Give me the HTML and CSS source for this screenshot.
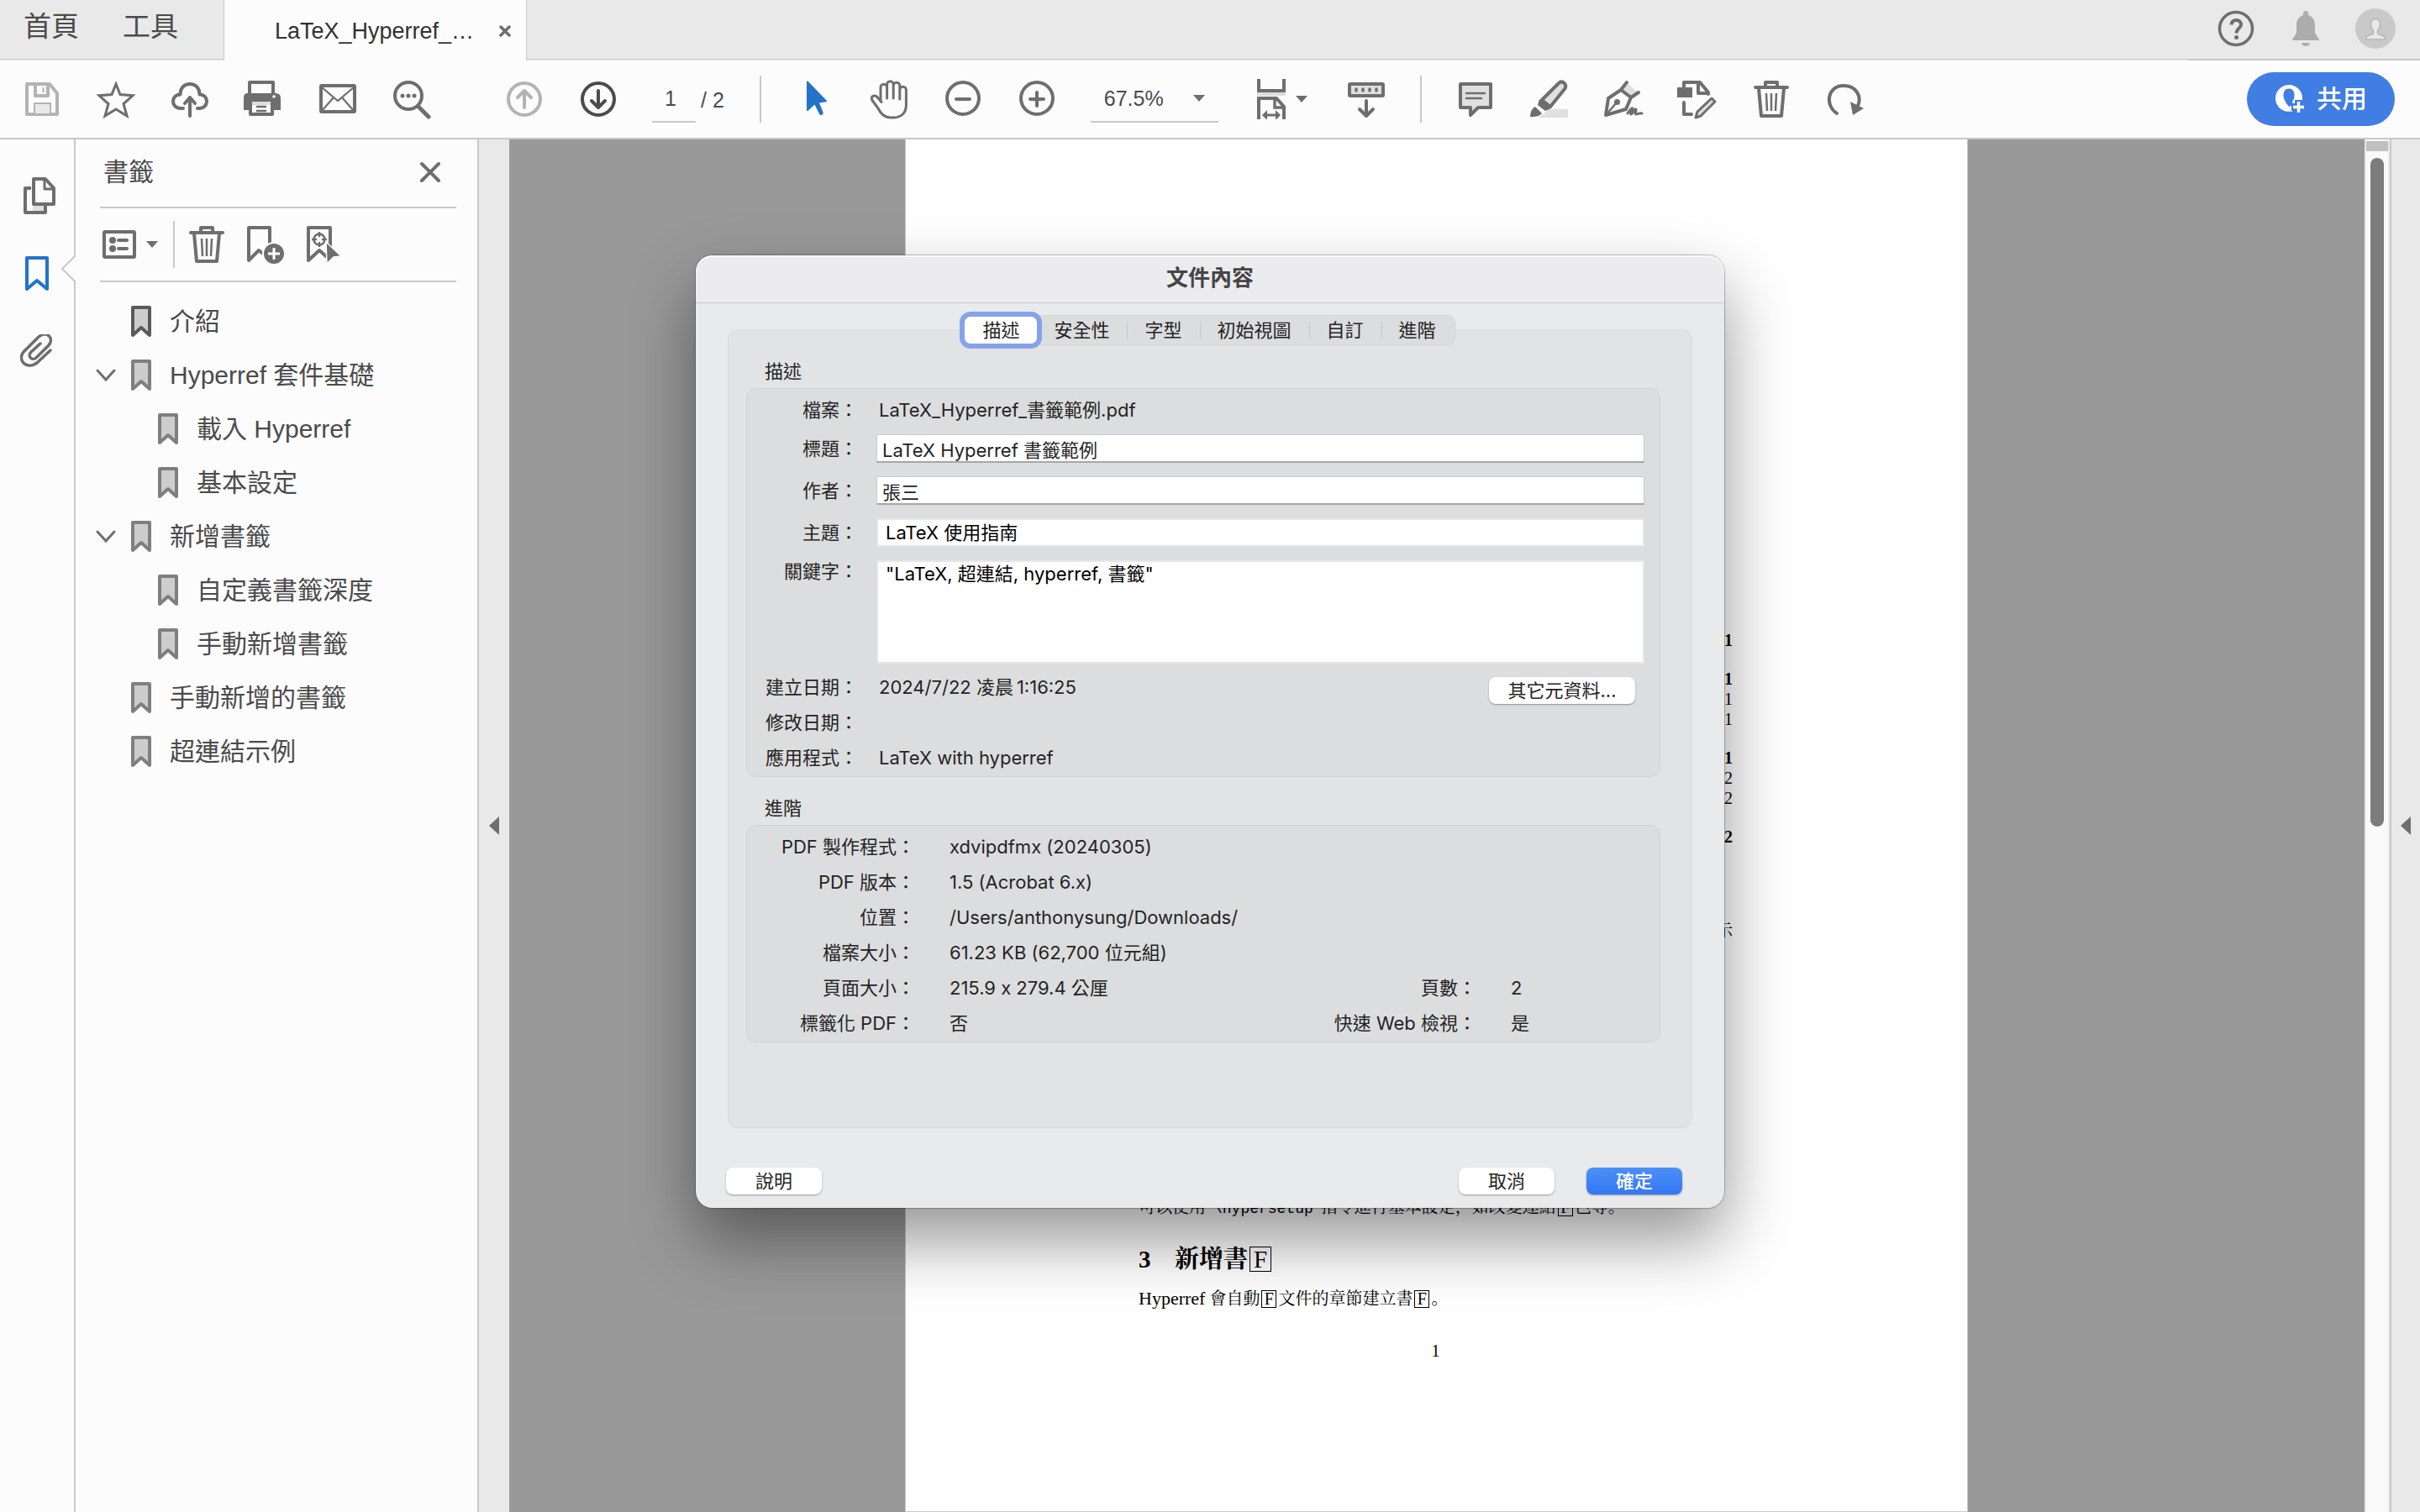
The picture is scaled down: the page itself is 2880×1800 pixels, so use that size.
FILE: index.html
```html
<!DOCTYPE html>
<html lang="zh-Hant">
<head>
<meta charset="utf-8">
<title>LaTeX_Hyperref_書籤範例.pdf</title>
<link rel="stylesheet" href="styles.css">
</head>
<body>
<svg class="defs" aria-hidden="true">
  <symbol id="mark" viewBox="0 0 24 38"><path class="mark-shape" d="M2 2H22V35L12 26L2 35Z"/></symbol>
  <symbol id="trash" viewBox="0 0 48 48"><g fill="none" stroke="currentColor"><path stroke-width="4" stroke-linecap="round" stroke-linejoin="round" d="M5 10H43M17 9V4H31V9M9 11L12 44H36L39 11"/><path stroke-width="2.5" d="M18 17L19 38M24 17V38M30 17L29 38"/></g></symbol>
</svg>

<header class="tabbar">
  <nav class="tabbar-nav">
    <a href="#home">首頁</a>
    <a href="#tools">工具</a>
  </nav>
  <div class="doc-tab">
    <span>LaTeX_Hyperref_…</span>
    <button class="plain" aria-label="關閉索引標籤"><svg width="14" height="14" viewBox="0 0 14 14"><path d="M2 2L12 12M12 2L2 12" stroke="currentColor" stroke-width="3.5" stroke-linecap="round"/></svg></button>
  </div>
  <div class="tabbar-rest"></div>
  <div class="account">
    <button class="plain" aria-label="說明"><svg width="44" height="44" viewBox="0 0 44 44" fill="none" stroke="currentColor"><circle cx="22" cy="22" r="19.5" stroke-width="3.5"/><path d="M16.500 17.500C17 13 20 12 22.500 12C26 12 28 14.500 28 17.500C28 21.500 22.500 22 22.500 27.500" stroke-width="4"/><circle cx="22.500" cy="32.500" r="2.500" fill="currentColor" stroke="none"/></svg></button>
    <button class="plain bell" aria-label="通知"><svg width="34" height="42" viewBox="0 0 34 42" fill="currentColor"><path d="M14 5V3a3 3 0 0 1 6 0V5C26 7 28 11 28 18V26L33 34V35H1V34L6 26V18C6 11 8 7 14 5ZM12 38H22C21 41 19 42 17 42S13 41 12 38Z"/></svg></button>
    <button class="plain avatar" aria-label="個人檔案"><svg width="48" height="48" viewBox="0 0 48 48"><circle cx="24" cy="24" r="24" fill="#c9c9c9"/><path d="M24 12.500C27.500 12.500 29.500 15 29.500 19C29.500 23 27.500 25 26.500 27V30L35 33.500V37H13V33.500L21.500 30V27C20.500 25 18.500 23 18.500 19C18.500 15 20.500 12.500 24 12.500Z" fill="#e9e9e9" stroke="#b5b5b5" stroke-width="1.500"/></svg></button>
  </div>
</header>

<div class="toolbar">
  <button class="tool faded" aria-label="儲存"><svg viewBox="0 0 48 48" fill="none" stroke="currentColor"><path stroke-width="4" stroke-linejoin="round" d="M6 6H33L42 17V42H6ZM16 6V20H31V6"/><path stroke-width="2" fill="#e9e9e9" d="M15 42V29H34V42Z"/><path stroke-width="2" d="M25.500 10V16"/></svg></button>
  <button class="tool" aria-label="加星號"><svg viewBox="0 0 48 48" fill="none" stroke="currentColor"><path stroke-width="3" d="M24 6L29 18.500L44 19.800L33 29.500L37 44L24 36L11 44L15 29.500L4 19.800L19 18.500Z"/></svg></button>
  <button class="tool" aria-label="上傳"><svg viewBox="0 0 48 48" fill="none" stroke="currentColor" stroke-width="4" stroke-linecap="round" stroke-linejoin="round"><path d="M16 35H13C7.500 35 4 31 4 27C4 22 7.500 18.500 12.500 18.500C12.500 11 17 6 24 6S35.500 11 35.500 18.500C40.500 18.500 44 22 44 27C44 31 40.500 35 35 35H33"/><path d="M24 44V22M18 29L24 22L30 29"/></svg></button>
  <button class="tool" aria-label="列印"><svg viewBox="2 0 48 48" fill="none" stroke="currentColor"><path stroke-width="4" stroke-linejoin="round" d="M9 20V4H37V20"/><path fill="currentColor" stroke="none" d="M6 17H8V14H38V17H40Q46 17 46 23V37H2V23Q2 17 6 17Z"/><path fill="#fcfcfc" stroke="none" d="M11 6H35V17H11Z"/><path stroke-width="4" stroke-linejoin="round" fill="#fff" d="M10 27H36V42H10Z"/><path fill="#ddd" stroke="none" d="M12 27H34V31H12Z"/><path stroke-width="2.500" d="M17 33H29M17 38H29"/><circle cx="38" cy="21" r="1.800" fill="#fff" stroke="none"/></svg></button>
  <button class="tool" aria-label="電子郵件"><svg viewBox="0 0 48 48" fill="none" stroke="currentColor"><rect x="4" y="8" width="40" height="31" rx="1" stroke-width="4"/><path stroke-width="2.200" d="M5 10L24 26L43 10M5 38L19 22M43 38L29 22"/></svg></button>
  <button class="tool" aria-label="尋找"><svg viewBox="0 0 48 48" fill="none" stroke="currentColor"><circle cx="20" cy="20" r="16" stroke-width="4"/><path d="M32 33L44 45" stroke-width="5" stroke-linecap="round"/><g fill="currentColor" stroke="none"><circle cx="13" cy="20" r="2.500"/><circle cx="20" cy="20" r="2.500"/><circle cx="27" cy="20" r="2.500"/></g></svg></button>

  <div class="pager">
    <button class="tool faded" aria-label="上一頁"><svg viewBox="0 0 48 48" fill="none" stroke="currentColor" stroke-width="4" stroke-linecap="round" stroke-linejoin="round"><circle cx="24" cy="24" r="19"/><path d="M24 34V14M16 22L24 14L32 22"/></svg></button>
    <button class="tool" aria-label="下一頁"><svg viewBox="0 0 48 48" fill="none" stroke="currentColor" stroke-width="4" stroke-linecap="round" stroke-linejoin="round"><circle cx="24" cy="24" r="19"/><path d="M24 14V34M16 26L24 34L32 26"/></svg></button>
    <input class="page-input" type="text" value="1" aria-label="頁碼">
    <span class="page-total">/ 2</span>
  </div>
  <span class="tool-sep"></span>
  <button class="tool active" aria-label="選取"><svg viewBox="-2 0 48 48" fill="currentColor"><path d="M12 3.500C12 2.500 13 2.300 13.800 3L35.500 25.500C36.500 26.600 36 27.200 35 27.300L27 28.500L31.500 39.500C32.500 42.500 28.500 44.500 27 41.500L21.500 30.500L14 37.500C12.800 38.500 12 38 12 37Z"/></svg></button>
  <button class="tool" aria-label="手形"><svg viewBox="0 0 48 48" fill="none" stroke="currentColor" stroke-width="3" stroke-linecap="round" stroke-linejoin="round"><path d="M14 26V10a3.800 3.800 0 0 1 7.600 0V23M21.600 22V6.500a3.800 3.800 0 0 1 7.600 0V23M29.200 22V8a3.800 3.800 0 0 1 7.600 0V24M36.800 22V13a3.800 3.800 0 0 1 7.600 0V31C44.400 41 38 46 29 46H26C18 46 14 41 11 35L3.800 25C2 21 6 18.500 9.500 21L15 27.500"/></svg></button>
  <button class="tool" aria-label="縮小"><svg viewBox="0 0 48 48" fill="none" stroke="currentColor" stroke-width="4" stroke-linecap="round"><circle cx="24" cy="23" r="19"/><path d="M16 24H32"/></svg></button>
  <button class="tool" aria-label="放大"><svg viewBox="0 0 48 48" fill="none" stroke="currentColor" stroke-width="4" stroke-linecap="round"><circle cx="24" cy="23" r="19"/><path d="M16 24H32M24 16V32"/></svg></button>
  <button class="zoom-level" aria-label="縮放比例"><span>67.5%</span><i class="caret"></i></button>
  <button class="fit" aria-label="符合頁寬"><svg viewBox="0 0 48 48" fill="none" stroke="currentColor" stroke-width="4"><path fill="#ddd" stroke="none" d="M6 15H40V20H6Z"/><path d="M8 0V14H38V0M8 48V23H29L38 33V48"/><path d="M27 23V34H38" stroke-width="3.500"/><path stroke-width="3" d="M14 43H32"/><path fill="currentColor" stroke="none" d="M12 43L18 37V49ZM34 43L28 37V49Z"/></svg><i class="caret"></i></button>
  <button class="tool" aria-label="捲動模式"><svg viewBox="0 0 48 48" fill="none" stroke="currentColor" stroke-width="4" stroke-linecap="round" stroke-linejoin="round"><rect x="4" y="6" width="40" height="14" rx="1" fill="#e0e0e0"/><path d="M12 12V14M20 12V14M28 12V14M36 12V14" stroke-width="3.500"/><path d="M24 26V43M16 36L24 44L32 36"/></svg></button>
  <span class="tool-sep"></span>
  <button class="tool" aria-label="註解"><svg viewBox="0 0 48 48" fill="none" stroke="currentColor"><path fill="#e0e0e0" stroke-width="4" stroke-linejoin="round" d="M6 6H42V34H27L18 43V34H6Z"/><path stroke-width="2.500" stroke-linecap="round" d="M13 17H35M13 23H31"/></svg></button>
  <button class="tool" aria-label="螢光標示"><svg viewBox="0 0 48 48" fill="none" stroke="currentColor" stroke-linejoin="round"><path fill="#e0e0e0" stroke="none" d="M24 36H46V46H11Z"/><path fill="#e0e0e0" stroke-width="4" d="M15 25L35 5C37 3 39.500 3 41.500 5C43.800 7.200 43.800 9.500 42 12L25 33Z"/><path fill="currentColor" stroke="none" d="M12 24L26 35L19 38L10 31ZM7 33L15 41C12 45 6 45 1 45C1 40 3 35 7 33Z"/></svg></button>
  <button class="tool" aria-label="簽名"><svg viewBox="0 0 48 48" fill="none" stroke="currentColor" stroke-width="4" stroke-linecap="round" stroke-linejoin="round"><path fill="#e0e0e0" stroke="none" d="M28 4L42 17L33 21L21 13Z"/><path d="M28 4L21 13L33 22L42 16M21 13L6 23L3 43L27 36L33 22"/><path stroke-width="2.500" d="M4 42L15 29"/><circle cx="16.500" cy="27.500" r="3.500" fill="currentColor" stroke="none"/><path stroke-width="3" d="M29 41C31 38 34 34 35 35S31 42 33 42S38 35 39 36S37 42 39 42S44 40 46 41"/></svg></button>
  <button class="tool" aria-label="編輯 PDF"><svg viewBox="0 0 48 48" fill="none" stroke="currentColor" stroke-width="4" stroke-linecap="round" stroke-linejoin="round"><path d="M8 10V4H27L37 16V18M25 5V17H36M8 28V42H17"/><path fill="currentColor" stroke="none" d="M0 10H18V22H0Z"/><path fill="#e0e0e0" stroke-width="3" d="M41 23L45 27L28 44L22 46L24 39Z"/></svg></button>
  <button class="tool" aria-label="刪除"><svg><use href="#trash"/></svg></button>
  <button class="tool" aria-label="旋轉"><svg viewBox="0 0 48 48" fill="none" stroke="currentColor" stroke-width="4" stroke-linecap="round"><path d="M14 41C-1 31 3 8 22 8C37 8 45 21 38 34"/><path d="M30 27L46 35L33 43Z" fill="currentColor" stroke="none"/></svg></button>
  <button class="share"><svg width="36" height="36" viewBox="0 0 36 36"><circle cx="17" cy="17" r="16" fill="#fff"/><path d="M17 5.500C21.500 5.500 23.500 9 23.500 13.500C23.500 17.500 22 19.500 21 21V22.500L27 25L17 34L13 33V21C12 19.500 10.500 17.500 10.500 13.500C10.500 9 12.500 5.500 17 5.500Z" fill="#407ee3"/><path d="M5 25L13.500 22.500L17 27L20.500 25.500V31.500C19 33 16 33 14.500 32.700C10 32 7 29 5 25Z" fill="#fff"/><path d="M28.500 19V36M20 27.500H36" stroke="#407ee3" stroke-width="9"/><path d="M28.500 21V34M22 27.500H35" stroke="#fff" stroke-width="3.500"/></svg>共用</button>
</div>

<div class="workspace">
  <nav class="rail" aria-label="導覽窗格">
    <button class="plain" aria-label="頁面縮圖"><svg width="44" height="46" viewBox="-1 0 44 46" fill="none" stroke="currentColor" stroke-width="4" stroke-linejoin="round"><path fill="#e0e0e0" stroke="none" d="M14 34H28V42H14Z"/><path d="M12 14H5V43H29V34"/><path fill="#fcfcfc" d="M15 3H29L39 14V33H15Z"/><path d="M28 4V15H38" stroke-width="3"/></svg></button>
    <button class="plain current" aria-label="書籤"><svg width="44" height="46" viewBox="0 0 44 46" fill="none" stroke="currentColor" stroke-width="4" stroke-linejoin="round"><path d="M8 3H32V40L20 30L8 40Z"/></svg></button>
    <button class="plain" aria-label="附件"><svg width="44" height="46" viewBox="2 5 44 46" fill="none" stroke="currentColor" stroke-width="3.500" stroke-linecap="round"><path d="M38 24L22 39C10 48-2 36 6 26L24 8C34 0 43 10 36 18L21 33C16 37 10 31 15 26L26 16"/></svg></button>
    <svg class="notch" width="18" height="32" viewBox="0 0 18 32"><path d="M18 0L2 16L18 32" fill="#fcfcfc" stroke="#c8c8c8" stroke-width="2"/></svg>
  </nav>

  <aside class="panel">
    <div class="panel-head">
      <h2>書籤</h2>
      <button class="plain" aria-label="關閉"><svg width="26" height="26" viewBox="0 0 26 26"><path d="M3 3L23 23M23 3L3 23" stroke="currentColor" stroke-width="4" stroke-linecap="round"/></svg></button>
    </div>
    <div class="panel-tools">
      <button class="plain options" aria-label="選項"><svg width="42" height="36" viewBox="0 0 42 36" fill="none" stroke="currentColor" stroke-width="4"><rect x="3" y="3" width="36" height="30" rx="1"/><path d="M20 13H30M20 23H30" stroke-linecap="round"/><g fill="currentColor" stroke="none"><circle cx="13" cy="13" r="4"/><circle cx="13" cy="23" r="4"/></g></svg><i class="caret"></i></button>
      <span class="tool-sep"></span>
      <button class="plain" aria-label="刪除書籤"><svg width="48" height="48"><use href="#trash"/></svg></button>
      <button class="plain" aria-label="新增書籤"><svg width="48" height="48" viewBox="0 0 48 48" fill="none" stroke="currentColor"><path stroke-width="4" stroke-linejoin="round" d="M29 27V4H4V43L16 31L21 35"/><circle cx="34" cy="35" r="13" fill="currentColor" stroke="#fcfcfc" stroke-width="2"/><path d="M34 28V42M27 35H41" stroke="#fff" stroke-width="3"/></svg></button>
      <button class="plain" aria-label="尋找目前書籤"><svg width="48" height="48" viewBox="0 0 48 48" fill="none" stroke="currentColor"><path stroke-width="4" stroke-linejoin="round" d="M31 27V4H5V43L18 31L27 39"/><circle cx="18" cy="18" r="6.500" stroke-width="2.500"/><path stroke-width="2.500" d="M18 9V15M18 21V27M9 18H15M21 18H27"/><path d="M26 21L44 38L35 39L27 47Z" fill="currentColor" stroke="#fcfcfc" stroke-width="1.500"/></svg></button>
    </div>
    <ul class="tree">
      <li><div class="node"><span class="twist"></span><a class="selected" href="#intro"><svg><use href="#mark"/></svg>介紹</a></div></li>
      <li><div class="node"><button class="twist" aria-label="收合"><svg width="24" height="16" viewBox="0 0 24 16"><path d="M2 2L12 13L22 2" fill="none" stroke="currentColor" stroke-width="3" stroke-linecap="round"/></svg></button><a href="#basics"><svg><use href="#mark"/></svg>Hyperref 套件基礎</a></div>
        <ul>
          <li><div class="node"><span class="twist"></span><a href="#load"><svg><use href="#mark"/></svg>載入 Hyperref</a></div></li>
          <li><div class="node"><span class="twist"></span><a href="#setup"><svg><use href="#mark"/></svg>基本設定</a></div></li>
        </ul>
      </li>
      <li><div class="node"><button class="twist" aria-label="收合"><svg width="24" height="16" viewBox="0 0 24 16"><path d="M2 2L12 13L22 2" fill="none" stroke="currentColor" stroke-width="3" stroke-linecap="round"/></svg></button><a href="#add"><svg><use href="#mark"/></svg>新增書籤</a></div>
        <ul>
          <li><div class="node"><span class="twist"></span><a href="#depth"><svg><use href="#mark"/></svg>自定義書籤深度</a></div></li>
          <li><div class="node"><span class="twist"></span><a href="#manual"><svg><use href="#mark"/></svg>手動新增書籤</a></div></li>
        </ul>
      </li>
      <li><div class="node"><span class="twist"></span><a href="#added"><svg><use href="#mark"/></svg>手動新增的書籤</a></div></li>
      <li><div class="node"><span class="twist"></span><a href="#example"><svg><use href="#mark"/></svg>超連結示例</a></div></li>
    </ul>
  </aside>

  <button class="collapse left" aria-label="收合左側窗格"><i></i></button>

  <main class="canvas">
    <article class="page" lang="zh-Hans">
      <ol class="toc">
        <li class="sec">1</li>
        <li class="sec">1</li>
        <li>1</li>
        <li>1</li>
        <li class="sec">1</li>
        <li>2</li>
        <li>2</li>
        <li class="sec">2</li>
      </ol>
      <p class="line-end">示</p>
      <p class="para-setup">可以使用 <code>\hypersetup</code> 指令進行基本設定，如改變連結<b class="tofu">F</b>色等。</p>
      <h3><span>3</span>新增書<b class="tofu">F</b></h3>
      <p><span class="latin">Hyperref</span> 會自動<b class="tofu">F</b>文件的章節建立書<b class="tofu">F</b>。</p>
      <p class="folio">1</p>
    </article>
  </main>

  <div class="scrollbar"><span class="scroll-split"></span><span class="scroll-thumb"></span></div>
  <button class="collapse right" aria-label="展開右側窗格"><i></i></button>
</div>

<div class="overlay">
  <form class="dialog" role="dialog" aria-labelledby="dlg-title">
    <h1 id="dlg-title">文件內容</h1>
    <div class="dialog-body">
      <div class="tabs" role="tablist">
        <button type="button" role="tab" aria-selected="true">描述</button>
        <button type="button" role="tab">安全性</button>
        <button type="button" role="tab">字型</button>
        <button type="button" role="tab">初始視圖</button>
        <button type="button" role="tab">自訂</button>
        <button type="button" role="tab">進階</button>
      </div>
      <div class="tab-panel">
        <h2>描述</h2>
        <div class="box">
          <div class="row"><span class="label">檔案：</span><span class="value">LaTeX_Hyperref_書籤範例.pdf</span></div>
          <div class="row field"><label class="label" for="f-title">標題：</label><input id="f-title" class="bezel" type="text" value="LaTeX Hyperref 書籤範例"></div>
          <div class="row field"><label class="label" for="f-author">作者：</label><input id="f-author" class="bezel" type="text" value="張三"></div>
          <div class="row field"><label class="label" for="f-subject">主題：</label><input id="f-subject" class="flat" type="text" value="LaTeX 使用指南"></div>
          <div class="row keywords"><label class="label" for="f-keys">關鍵字：</label><textarea id="f-keys" class="flat">"LaTeX, 超連結, hyperref, 書籤"</textarea></div>
          <div class="row"><span class="label">建立日期：</span><span class="value">2024/7/22 凌晨&#8201;1:16:25</span><button type="button" class="push meta">其它元資料...</button></div>
          <div class="row"><span class="label">修改日期：</span><span class="value"></span></div>
          <div class="row"><span class="label">應用程式：</span><span class="value">LaTeX with hyperref</span></div>
        </div>
        <h2>進階</h2>
        <div class="box">
          <table>
            <colgroup><col class="c-label"><col><col class="c-label-2"><col class="c-value-2"></colgroup>
            <tr><th>PDF 製作程式：</th><td colspan="3">xdvipdfmx (20240305)</td></tr>
            <tr><th>PDF 版本：</th><td colspan="3">1.5 (Acrobat 6.x)</td></tr>
            <tr><th>位置：</th><td colspan="3">/Users/anthonysung/Downloads/</td></tr>
            <tr><th>檔案大小：</th><td colspan="3">61.23 KB (62,700 位元組)</td></tr>
            <tr><th>頁面大小：</th><td>215.9 x 279.4 公厘</td><th>頁數：</th><td>2</td></tr>
            <tr><th>標籤化 PDF：</th><td>否</td><th>快速 Web 檢視：</th><td>是</td></tr>
          </table>
        </div>
      </div>
    </div>
    <footer>
      <button type="button" class="push help">說明</button>
      <button type="button" class="push">取消</button>
      <button type="submit" class="push primary">確定</button>
    </footer>
  </form>
</div>
</body>
</html>
```
FILE: styles.css
```css
* { box-sizing: border-box; }

body {
  margin: 0;
  height: 100vh;
  display: grid;
  grid-template-rows: 72px 94px minmax(0, 1fr);
  overflow: hidden;
  background: #fcfcfc;
  color: #4b4b4b;
  font: 30px/40px "Liberation Sans", "Noto Sans CJK TC", sans-serif;
}

button, input, textarea { font: inherit; color: inherit; margin: 0; }
button { border: 0; background: none; padding: 0; }
a { color: inherit; text-decoration: none; }
h1, h2, h3, p, ul, ol { margin: 0; padding: 0; font-weight: 400; }
ul, ol { list-style: none; }
svg { display: block; flex: none; }
.defs { position: absolute; width: 0; height: 0; }
.plain { display: flex; align-items: center; color: #6e6e6e; }

/* Tab bar */
.tabbar { display: flex; background: #e9e9e9; }
.tabbar-nav {
  display: flex;
  gap: 52px;
  width: 266px;
  padding: 12px 0 0 28px;
  font-size: 33px;
  border-bottom: 1px solid #c8c8c8;
  height: 71px;
}
.doc-tab {
  display: flex;
  align-items: center;
  justify-content: space-between;
  width: 361px;
  padding: 2px 18px 0 60px;
  background: #fcfcfc;
  border: 1px solid #c8c8c8;
  border-width: 0 1px;
  color: #323232;
  font-size: 27px;
}
.tabbar-rest { flex: 1; height: 71px; border-bottom: 1px solid #c8c8c8; }
.account {
  display: flex;
  align-items: center;
  width: 276px;
  padding: 0 30px 2px 35px;
  border-bottom: 2px solid #c8c8c8;
}
.bell { margin: 0 42px 0 44px; color: #acacac; }
.bell + .avatar { margin-left: auto; }

/* Main toolbar */
.toolbar {
  display: flex;
  align-items: center;
  padding: 0 30px 0 6px;
  border-bottom: 2px solid #c8c8c8;
  color: #6e6e6e;
}
.tool { width: 88px; height: 88px; display: grid; place-items: center; flex: none; }
.tool svg { width: 48px; height: 48px; overflow: visible; }
.tool.faded { color: #b3b3b3; }
.tool.active { color: #2273c9; }
.tool-sep { width: 2px; height: 56px; background: #c8c8c8; margin: 0 20px; }
.pager { display: flex; align-items: center; margin-left: 46px; color: #4b4b4b; font-size: 25px; }
.page-input {
  width: 52px;
  height: 56px;
  margin: 0 6px 0 20px;
  padding: 0 8px 0 0;
  border: 0;
  border-bottom: 2px solid #c8c8c8;
  background: none;
  text-align: center;
}
.page-total { padding: 2px 22px 0 0; }
.caret { border: 7px solid transparent; border-top: 8px solid #6e6e6e; border-bottom: 0; }
.zoom-level {
  display: flex;
  align-items: center;
  justify-content: space-between;
  width: 152px;
  height: 56px;
  margin: 0 32px 0 20px;
  padding: 0 16px;
  border-bottom: 2px solid #c8c8c8;
  color: #4b4b4b;
  font-size: 25px;
}
.fit { display: flex; align-items: center; gap: 4px; width: 100px; padding-left: 8px; }
.fit svg { width: 48px; height: 48px; }
.share {
  display: flex;
  align-items: center;
  justify-content: center;
  gap: 14px;
  width: 176px;
  height: 64px;
  margin-left: auto;
  border-radius: 32px;
  background: #407ee3;
  color: #fff;
  font-weight: 500;
}

/* Workspace */
.workspace { display: flex; min-height: 0; }
.rail {
  position: relative;
  display: flex;
  flex-direction: column;
  align-items: center;
  gap: 48px;
  width: 90px;
  padding: 44px 0 0 3px;
  border-right: 2px solid #c8c8c8;
}
.rail .current { color: #2273c9; }
.notch { position: absolute; top: 138px; right: -2px; }
.panel { width: 480px; padding: 0 25px 0 29px; border-right: 2px solid #c8c8c8; }
.panel-head {
  display: flex;
  align-items: center;
  justify-content: space-between;
  height: 82px;
  padding: 0 18px 2px 4px;
  border-bottom: 2px solid #c8c8c8;
}
.panel-head h2 { font-size: 30px; }
.panel-tools {
  display: flex;
  align-items: center;
  gap: 22px;
  height: 88px;
  padding-left: 2px;
  border-bottom: 2px solid #c8c8c8;
}
.panel-tools .tool-sep { margin: 0 -8px 0 -4px; }
.options { gap: 11px; }
.tree { padding-top: 15px; }
.tree ul { padding-left: 32px; }
.node { display: flex; align-items: center; height: 64px; margin-left: -5px; }
.twist { width: 42px; color: #6e6e6e; }
.node a { display: flex; align-items: center; gap: 22px; white-space: nowrap; }
.node svg { overflow: visible; }
.node a svg { width: 24px; height: 38px; color: #7f7f7f; }
.node a.selected svg { color: #5a5a5a; }
.mark-shape { fill: #cdcdcd; stroke: currentColor; stroke-width: 4px; stroke-linejoin: round; }
.collapse { display: grid; place-items: center; background: #e9e9e9; }
.collapse i { border: 11px solid transparent; border-right: 12px solid #6e6e6e; border-left: 0; }
.collapse.left { width: 36px; }
.collapse.right { width: 36px; border-left: 2px solid #c8c8c8; }

/* Document */
.canvas { flex: 1; display: grid; justify-content: center; background: #999; }
.page {
  width: 1265px;
  margin-right: 1px;
  padding: 584px 279px 0 277px;
  background: #fff;
  border: 1px solid #c8c8c8;
  border-top: 0;
  color: #000;
  font: 20px/24px "Liberation Serif", "Noto Serif CJK SC", "Noto Sans CJK SC", serif;
}
.toc { text-align: right; }
.toc .sec { font-weight: 700; margin-top: 22px; }
.toc .sec:first-child { margin-top: 0; }
.line-end { margin-top: 88px; text-align: right; }
.page p.para-setup { margin-top: 305px; }
.page code { margin: 0 4px; font: 18px "Liberation Mono", monospace; }
.page h3 { display: flex; align-items: center; margin-top: 30px; font: 700 29px/40px "Liberation Serif", "Noto Serif CJK SC", "Noto Sans CJK SC", serif; }
.page h3 span { width: 43px; }
.page h3 + p { margin-top: 15px; }
.page .folio { margin-top: 38px; text-align: center; }
.latin { font-size: 22px; }
.tofu {
  display: inline-block;
  width: 18px;
  margin: 0 2px;
  border: 1px solid currentColor;
  font-weight: 400;
  line-height: 19px;
  text-align: center;
}
h3 .tofu { width: 26px; line-height: 28px; }

.scrollbar {
  display: flex;
  flex-direction: column;
  align-items: center;
  width: 30px;
  padding-top: 2px;
  background: #fafafa;
  border: 2px solid #e9e9e9;
  border-width: 0 2px;
}
.scroll-split { width: 26px; height: 12px; background: #c0c0c0; }
.scroll-thumb { width: 16px; height: 796px; margin-top: 8px; border-radius: 8px; background: #7c7c7c; }

/* Document properties dialog */
.overlay { position: absolute; inset: 0; display: grid; justify-content: center; align-items: start; padding-top: 304px; }
.dialog {
  width: 1224px;
  border-radius: 20px;
  background: #e9eaec;
  box-shadow: 0 0 1px 1px rgba(0, 0, 0, .25), 0 38px 80px rgba(0, 0, 0, .42);
  color: #242424;
  font: 22px/30px Inter, "Noto Sans CJK TC", sans-serif;
}
.dialog h1 {
  height: 57px;
  border-bottom: 1px solid #c6c7c9;
  border-radius: 20px 20px 0 0;
  background: #ececee;
  box-shadow: inset 0 2px 1px #fafafa;
  color: #454545;
  font-size: 26px;
  font-weight: 700;
  line-height: 54px;
  text-align: center;
}
.dialog-body { padding: 14px 38px 0; }
.tabs {
  position: relative;
  display: flex;
  align-items: center;
  width: max-content;
  height: 36px;
  margin: 0 auto -19px;
  padding-right: 2px;
  border-radius: 10px;
  background: #dcdddf;
  box-shadow: inset 0 0 0 1px #d3d4d6;
}
.tabs button { height: 20px; padding: 0 21px 0 20px; line-height: 20px; border-left: 1px solid #c5c6c8; }
.tabs button:first-child {
  height: 32px;
  line-height: 32px;
  padding: 0 21px;
  border: 0;
  border-radius: 7px;
  background: #fff;
  box-shadow: 0 0 0 6px #86a3e9;
}
.tabs button:nth-child(2) { border: 0; }
.tab-panel {
  padding: 34px 37px 101px 21px;
  border: 1px solid #d8d9db;
  border-radius: 12px;
  background: #e2e3e5;
}
.tab-panel h2 { padding-left: 22px; font-size: 22px; }
.box { margin-top: 5px; padding: 4px 18px 1px 0; border: 1px solid #d1d2d4; border-radius: 12px; background: #dcddde; }
.box + h2 { margin-top: 22px; }
.row { display: flex; align-items: center; gap: 22px; height: 42px; }
.row.field { height: 50px; }
.row.keywords { height: 138px; align-items: flex-start; padding-top: 8px; }
.row.keywords .label { line-height: 26px; }
.label { width: 132px; flex: none; text-align: right; }
.value { padding-left: 3px; }
.row input, .row textarea { flex: 1; height: 34px; color: #000; background: #fff; }
.row .bezel { padding: 1px 6px 0; border: 1px solid #c9cacc; border-bottom: 2px solid #a6a7a9; color: #242424; }
.row .flat { padding: 0 9px 4px; border: 2px solid #e6e6e7; }
.row textarea { height: 123px; resize: none; line-height: 28px; }
.push {
  width: 114px;
  height: 32px;
  border-radius: 8px;
  background: #fff;
  box-shadow: 0 1px 2px rgba(0, 0, 0, .35);
  line-height: 32px;
}
.push.meta { width: 174px; margin: 8px 11px 0 auto; }
.push.primary { background: linear-gradient(#4b90f7, #3477f5); color: #fff; font-weight: 500; }
table { width: 100%; border-collapse: collapse; table-layout: fixed; font-variant-ligatures: no-contextual; }
.c-label { width: 200px; }
.c-label-2 { width: 180px; }
.c-value-2 { width: 200px; }
th, td { height: 42px; padding: 0; font-weight: 400; white-space: nowrap; text-align: left; }
th { text-align: right; }
td { padding-left: 41px; }
footer { display: flex; gap: 38px; padding: 47px 50px 16px 36px; }
.help { margin-right: auto; }
```
